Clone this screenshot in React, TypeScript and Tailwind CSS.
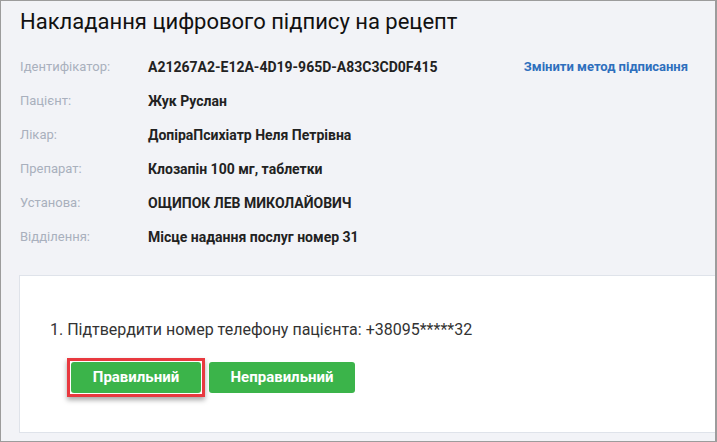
import React from 'react';

const rows: { label: string; value: string; link?: string }[] = [
  { label: 'Ідентифікатор:', value: 'A21267A2-E12A-4D19-965D-A83C3CD0F415', link: 'Змінити метод підписання' },
  { label: 'Пацієнт:', value: 'Жук Руслан' },
  { label: 'Лікар:', value: 'ДопіраПсихіатр Неля Петрівна' },
  { label: 'Препарат:', value: 'Клозапін 100 мг, таблетки' },
  { label: 'Установа:', value: 'ОЩИПОК ЛЕВ МИКОЛАЙОВИЧ' },
  { label: 'Відділення:', value: 'Місце надання послуг номер 31' },
];

const App: React.FC = () => {
  return (
    <div className="w-[717px] h-[442px] border border-r-2 border-[#9c9c9c] bg-[#f2f3f7] flex flex-col font-['Roboto',sans-serif] overflow-hidden">
      <h1 className="mt-[8px] pl-[19px] text-[22px] leading-[26px] text-[#111] font-normal">
        Накладання цифрового підпису на рецепт
      </h1>

      <div className="mt-[15px] pl-[19px] flex flex-col">
        {rows.map((r) => (
          <div key={r.label} className="h-[34px] flex items-center text-[13px]">
            <span className="w-[128px] text-[#a9b0bd]">{r.label}</span>
            <span className="text-[14px] font-bold text-[#222]">{r.value}</span>
            {r.link && (
              <a href="#" className="ml-auto pr-[27px] font-bold text-[#2e6fbd]">
                {r.link}
              </a>
            )}
          </div>
        ))}
      </div>

      <div className="mt-[21px] ml-[18px] h-[158px] bg-white border border-r-0 border-[#dfe3ea] pt-[44px] pl-[30px]">
        <p className="text-[16px] leading-[20px] text-[#333]">
          1. Підтвердити номер телефону пацієнта: +38095*****32
        </p>
        <div className="mt-[18px] ml-[17px] flex items-center gap-[4px]">
          <div className="border-[3px] border-[#e8393f] p-[1px] shadow-[0_3px_5px_rgba(0,0,0,0.35)]">
            <button className="h-[31px] w-[130px] rounded-[3px] bg-[#3bb44a] text-white text-[15px] font-bold">
              Правильний
            </button>
          </div>
          <button className="h-[31px] w-[146px] rounded-[3px] bg-[#3bb44a] text-white text-[15px] font-bold">
            Неправильний
          </button>
        </div>
      </div>
    </div>
  );
};

export default App;
